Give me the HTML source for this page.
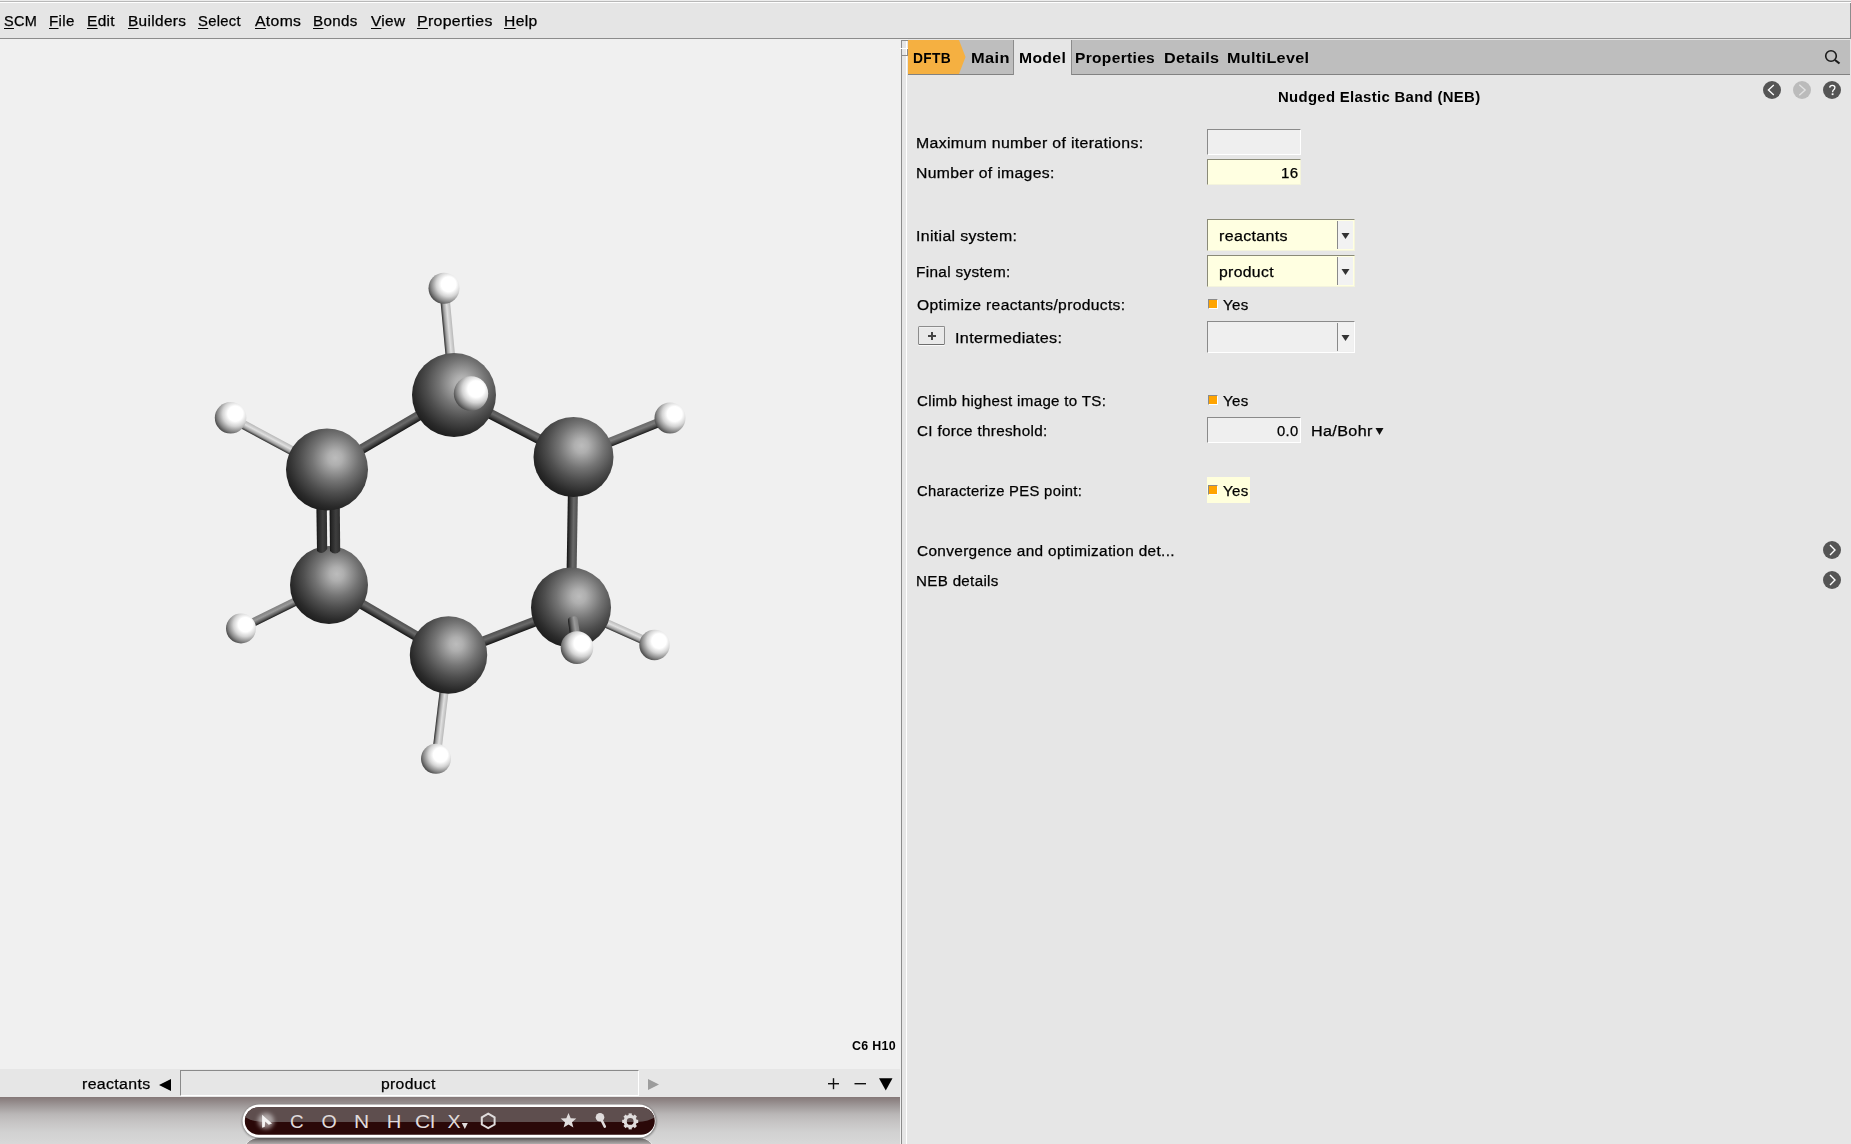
<!DOCTYPE html>
<html><head><meta charset="utf-8">
<style>
html,body{margin:0;padding:0;width:1851px;height:1144px;overflow:hidden;background:#f0f0f0;position:relative;font-family:"Liberation Sans",sans-serif;color:#000;}
.a{position:absolute;}
.t{position:absolute;font-size:14px;line-height:14px;white-space:pre;transform-origin:0 0;}
.u{text-decoration:underline;text-underline-offset:2px;}
#menubar{position:absolute;left:0;top:0;width:1851px;height:39px;background:#e5e5e5;}
</style></head>
<body>
<!-- menu bar -->
<div id="menubar">
  <div class="a" style="left:0;top:0;width:1851px;height:1px;background:#ececec"></div>
  <div class="a" style="left:0;top:1px;width:1851px;height:1px;background:#b8b8b8"></div>
  <div class="a" style="left:0;top:2px;width:1851px;height:1px;background:#fff"></div>
  <div class="a" style="left:0;top:38px;width:1851px;height:1px;background:#8c8c8c"></div>
  <div class="a" style="left:1850px;top:3px;width:1px;height:36px;background:#8c8c8c"></div>
</div>
<div id="menuitems">
</div>

<!--MOL--><svg class="a" style="left:0;top:0" width="900" height="1069" viewBox="0 0 900 1069">
<defs>
<radialGradient id="gc" cx="0.6" cy="0.36" r="0.74">
 <stop offset="0" stop-color="#bcbcbc"/><stop offset="0.12" stop-color="#afafaf"/><stop offset="0.38" stop-color="#747474"/>
 <stop offset="0.58" stop-color="#4e4e4e"/><stop offset="0.8" stop-color="#2a2a2a"/><stop offset="1" stop-color="#121212"/>
</radialGradient>
<radialGradient id="gh" cx="0.65" cy="0.37" r="0.8">
 <stop offset="0" stop-color="#ffffff"/><stop offset="0.3" stop-color="#ffffff"/><stop offset="0.5" stop-color="#d4d4d4"/>
 <stop offset="0.72" stop-color="#858585"/><stop offset="0.9" stop-color="#3a3a3a"/><stop offset="1" stop-color="#1e1e1e"/>
</radialGradient>
<linearGradient id="bd" x1="0" y1="0" x2="0" y2="1">
 <stop offset="0" stop-color="#121212"/><stop offset="0.25" stop-color="#3a3a3a"/><stop offset="0.6" stop-color="#6a6a6a"/><stop offset="1" stop-color="#505050"/>
</linearGradient>
<linearGradient id="bd2" x1="0" y1="0" x2="1" y2="0">
 <stop offset="0" stop-color="#0c0c0c"/><stop offset="0.2" stop-color="#262626"/><stop offset="0.6" stop-color="#3e3e3e"/><stop offset="1" stop-color="#2e2e2e"/>
</linearGradient>
<linearGradient id="bl" x1="0" y1="0" x2="0" y2="1">
 <stop offset="0" stop-color="#2a2a2a"/><stop offset="0.25" stop-color="#9a9a9a"/><stop offset="0.6" stop-color="#e0e0e0"/><stop offset="1" stop-color="#b8b8b8"/>
</linearGradient>
<linearGradient id="bm" x1="0" y1="0" x2="0" y2="1">
 <stop offset="0" stop-color="#1a1a1a"/><stop offset="0.25" stop-color="#5a5a5a"/><stop offset="0.6" stop-color="#9a9a9a"/><stop offset="1" stop-color="#808080"/>
</linearGradient>
<linearGradient id="bm2" x1="0" y1="0" x2="0" y2="1">
 <stop offset="0" stop-color="#1a1a1a"/><stop offset="0.25" stop-color="#4a4a4a"/><stop offset="0.6" stop-color="#7a7a7a"/><stop offset="1" stop-color="#6a6a6a"/>
</linearGradient>
</defs>
<g transform="translate(454.0,395.0) rotate(149.60)"><rect x="0" y="-5.00" width="147.2" height="10" fill="url(#bd)"/></g>
<g transform="translate(573.5,457.0) rotate(207.42)"><rect x="0" y="-5.00" width="134.6" height="10" fill="url(#bd)"/></g>
<g transform="translate(448.5,655.0) rotate(210.36)"><rect x="0" y="-5.00" width="138.5" height="10" fill="url(#bd)"/></g>
<g transform="translate(571.0,607.6) rotate(158.85)"><rect x="0" y="-5.00" width="131.4" height="10" fill="url(#bd)"/></g>
<g transform="translate(571.0,607.6) rotate(-89.05)"><rect x="0" y="-5.00" width="150.6" height="10" fill="url(#bd)"/></g>
<g transform="translate(454.0,395.0) rotate(-95.35)"><rect x="0" y="-4.75" width="107.2" height="9.5" fill="url(#bl)"/></g>
<g transform="translate(327.0,469.5) rotate(-151.80)"><rect x="0" y="-4.50" width="109.4" height="9" fill="url(#bl)"/></g>
<g transform="translate(329.0,585.0) rotate(153.70)"><rect x="0" y="-4.25" width="98.2" height="8.5" fill="url(#bm)"/></g>
<g transform="translate(436.0,758.8) rotate(276.87)"><rect x="0" y="-4.50" width="104.5" height="9" fill="url(#bl)"/></g>
<g transform="translate(670.0,418.0) rotate(157.99)"><rect x="0" y="-4.50" width="104.1" height="9" fill="url(#bm2)"/></g>
<g transform="translate(654.5,645.0) rotate(204.13)"><rect x="0" y="-4.50" width="91.5" height="9" fill="url(#bl)"/></g>
<circle cx="444" cy="288.3" r="15.5" fill="url(#gh)"/>
<circle cx="230.6" cy="417.8" r="15.8" fill="url(#gh)"/>
<circle cx="670" cy="418" r="15.5" fill="url(#gh)"/>
<circle cx="241" cy="628.5" r="15" fill="url(#gh)"/>
<circle cx="436" cy="758.8" r="15" fill="url(#gh)"/>
<circle cx="654.5" cy="645" r="15.2" fill="url(#gh)"/>
<circle cx="329" cy="585" r="39" fill="url(#gc)"/>
<path d="M316,480 L326.6,480 L327.2,549 Q322,556 317,551 Z" fill="url(#bd2)"/>
<path d="M329.2,480 L339.6,480 L340.2,551 Q335,556 330,551 Z" fill="url(#bd2)"/>
<circle cx="327" cy="469.5" r="41" fill="url(#gc)"/>
<circle cx="448.5" cy="655" r="38.7" fill="url(#gc)"/>
<circle cx="573.5" cy="457" r="40" fill="url(#gc)"/>
<circle cx="454" cy="395" r="42" fill="url(#gc)"/>
<circle cx="471" cy="393.5" r="17.2" fill="url(#gh)"/>
<circle cx="571" cy="607.6" r="40" fill="url(#gc)"/>
<g transform="translate(577.0,647.6) rotate(261.47)"><rect x="0" y="-5" width="31.4" height="10" rx="4" fill="url(#bm)"/></g>
<circle cx="577" cy="647.6" r="16.3" fill="url(#gh)"/>
</svg><!--/MOL-->

<!-- bottom nav bar -->
<div class="a" style="left:0;top:1069px;width:900px;height:28px;background:#e6e6e6"></div>
<svg class="a" style="left:158px;top:1078px" width="14" height="14"><polygon points="1,7 13,1 13,13" fill="#000"/></svg>
<div class="a" style="left:180px;top:1070px;box-sizing:border-box;width:459px;height:26px;background:#e6e6e6;border-top:1px solid #8a8a8a;border-left:1px solid #8a8a8a;border-right:1px solid #fff;border-bottom:1px solid #fff"></div>
<svg class="a" style="left:647px;top:1078px" width="14" height="14"><polygon points="1,1 12,6.5 1,12" fill="#9c9c9c"/></svg>
<svg class="a" style="left:826px;top:1076px" width="70" height="18">
 <rect x="2" y="7" width="11" height="1.4" fill="#111"/><rect x="6.8" y="2.2" width="1.4" height="11" fill="#111"/>
 <rect x="28.5" y="7" width="11.5" height="1.4" fill="#111"/>
 <polygon points="53,2.3 66.5,2.3 59.75,14.6" fill="#000"/>
</svg>

<!-- toolbar -->
<div class="a" style="left:0;top:1097px;width:900px;height:47px;background:linear-gradient(#847777 0px,#948b8b 5px,#a6a1a1 11px,#b9b6b6 17px,#c6c4c4 25px,#d1d1d1 35px,#d8d8d8 47px)"></div>
<svg class="a" style="left:236px;top:1098px" width="428" height="46">
 <defs>
  <filter id="bl1" x="-20%" y="-50%" width="140%" height="200%"><feGaussianBlur stdDeviation="1.2"/></filter>
  <filter id="bl2" x="-50%" y="-50%" width="200%" height="200%"><feGaussianBlur stdDeviation="2.2"/></filter>
  <clipPath id="pillclip"><rect x="8.8" y="9.2" width="410" height="27.6" rx="13.8" ry="13.8"/></clipPath>
  <linearGradient id="refl" x1="0" y1="0" x2="0" y2="1"><stop offset="0" stop-color="#fff" stop-opacity="0.5"/><stop offset="1" stop-color="#fff" stop-opacity="0"/></linearGradient>
 </defs>
 <linearGradient id="reflg" x1="0" y1="0" x2="0" y2="1"><stop offset="0" stop-color="#5e5a5a"/><stop offset="0.18" stop-color="#aaa6a6"/><stop offset="1" stop-color="#c8c4c4"/></linearGradient>
 <rect x="6.5" y="39.6" width="413" height="33" rx="16.5" fill="url(#reflg)" stroke="#f4f4f4" stroke-width="1" stroke-opacity="0.8"/>
 <rect x="6.3" y="7.3" width="414" height="33" rx="16.5" fill="#000" opacity="0.45" filter="url(#bl1)"/>
 <rect x="6.5" y="6.5" width="413" height="33" rx="16.5" fill="#fff"/>
 <g clip-path="url(#pillclip)">
  <rect x="0" y="0" width="428" height="46" fill="#2a0808"/>
  <path d="M0,0 L428,0 L428,12 C418,22 410,24 398,24 L32,24 C18,24 10,22 0,12 Z" fill="#5e4e4e"/>
 </g>
 <circle cx="30" cy="23" r="8" fill="#fff" opacity="0.5" filter="url(#bl2)"/>
 <path d="M26.1,16.8 L26.1,29.8 L28.8,28.8 L29.2,23.6 L32.7,26.8 L36,25.5 Z" fill="#f4f2f2"/>
 <path d="M252.2,15.6 L258.6,19.3 L258.6,26.5 L252.2,30.2 L245.8,26.5 L245.8,19.3 Z" fill="none" stroke="#e0dcdc" stroke-width="2"/>
 <polygon points="332.5,15 334.7,20.3 340.3,20.6 336,24.2 337.4,29.6 332.5,26.6 327.6,29.6 329,24.2 324.7,20.6 330.3,20.3" fill="#e0dcdc"/>
 <circle cx="364" cy="19.2" r="4.3" fill="#e0dcdc"/>
 <line x1="364.5" y1="20" x2="368.8" y2="28.6" stroke="#e0dcdc" stroke-width="2.6" stroke-linecap="round"/>
 <g transform="translate(394.2,23.4)">
  <circle r="5" fill="none" stroke="#e0dcdc" stroke-width="3.2"/>
  <g fill="#e0dcdc">
   <rect x="-1.6" y="-8" width="3.2" height="3.5"/>
   <rect x="-1.6" y="-8" width="3.2" height="3.5" transform="rotate(45)"/>
   <rect x="-1.6" y="-8" width="3.2" height="3.5" transform="rotate(90)"/>
   <rect x="-1.6" y="-8" width="3.2" height="3.5" transform="rotate(135)"/>
   <rect x="-1.6" y="-8" width="3.2" height="3.5" transform="rotate(180)"/>
   <rect x="-1.6" y="-8" width="3.2" height="3.5" transform="rotate(225)"/>
   <rect x="-1.6" y="-8" width="3.2" height="3.5" transform="rotate(270)"/>
   <rect x="-1.6" y="-8" width="3.2" height="3.5" transform="rotate(315)"/>
  </g>
 </g>
 <g fill="#e0dcdc" font-family="Liberation Sans" font-size="17.5">
  <text x="54" y="30.2" transform="translate(54,0) scale(1.08,1) translate(-54,0)">C</text>
  <text x="85.5" y="30.2" transform="translate(85.5,0) scale(1.12,1) translate(-85.5,0)">O</text>
  <text x="118" y="30.2" transform="translate(118,0) scale(1.2,1) translate(-118,0)">N</text>
  <text x="150.8" y="30.2" transform="translate(150.8,0) scale(1.15,1) translate(-150.8,0)">H</text>
  <text x="179" y="30.2" transform="translate(179,0) scale(1.2,1) translate(-179,0)">Cl</text>
  <text x="211.5" y="30.2" transform="translate(211.5,0) scale(1.12,1) translate(-211.5,0)">X</text>
 </g>
 <polygon points="225.8,25 231.8,25 228.8,31" fill="#e0dcdc"/>
</svg>

<!-- splitter -->
<div class="a" style="left:901px;top:40px;width:1px;height:1104px;background:#8c8c8c"></div>
<div class="a" style="left:902px;top:41px;width:4px;height:1103px;background:#e6e6e6"></div>
<div class="a" style="left:906px;top:41px;width:1px;height:1103px;background:#fff"></div>
<!-- right panel -->
<div class="a" style="left:907px;top:39px;width:944px;height:1105px;background:#e6e6e6"></div>
<div class="a" style="left:901px;top:39px;width:7px;height:1px;background:#f0f0f0"></div>


<!-- splitter handle notch -->
<div class="a" style="left:901px;top:40px;width:7px;height:1px;background:#8c8c8c"></div>
<div class="a" style="left:900px;top:48px;width:8px;height:1px;background:#fff"></div>
<div class="a" style="left:901px;top:55px;width:7px;height:1px;background:#8c8c8c"></div>
<div class="a" style="left:907px;top:49px;width:1px;height:6px;background:#8c8c8c"></div>
<!-- tab bar -->
<div class="a" style="left:908px;top:40px;width:942px;height:34px;background:#bebebe"></div>
<div class="a" style="left:908px;top:74px;width:942px;height:1px;background:#828282"></div>
<svg class="a" style="left:908px;top:40px" width="60" height="34"><polygon points="0,0 51,0 57.5,17 51,34 0,34" fill="#f5b041"/></svg>
<div class="a" style="left:1013px;top:40px;width:1px;height:35px;background:#8c8c8c"></div>
<div class="a" style="left:1014px;top:40px;width:57px;height:35px;background:#e6e6e6"></div>
<div class="a" style="left:1071px;top:40px;width:1px;height:35px;background:#8c8c8c"></div>
<svg class="a" style="left:1822px;top:46px" width="20" height="20"><circle cx="9" cy="10" r="5.3" fill="none" stroke="#1a1a1a" stroke-width="1.6"/><line x1="13" y1="14" x2="17.5" y2="17.5" stroke="#1a1a1a" stroke-width="2.2"/></svg>
<!-- nav circles -->
<svg class="a" style="left:1760px;top:78px" width="84" height="24">
 <circle cx="12" cy="12" r="9" fill="#555"/><polyline points="13.8,7 8.4,12 13.8,17" fill="none" stroke="#fff" stroke-width="1.3"/>
 <circle cx="42" cy="12" r="9" fill="#bbb"/><polyline points="39.3,6.8 45.2,12 39.3,17.2" fill="none" stroke="#e2e2e2" stroke-width="1.3"/>
 <circle cx="72" cy="12" r="9" fill="#555"/>
 <path d="M69.7,9.6 Q69.9,7.4 72.3,7.4 Q74.9,7.4 74.9,9.6 Q74.9,11.1 73.5,12 Q72.6,12.7 72.6,14.3" fill="none" stroke="#fff" stroke-width="1.3"/><rect x="71.7" y="15.3" width="1.8" height="1.8" fill="#fff"/>
</svg>

<!-- form -->

<!-- fields -->
<div class="a" style="left:1207px;top:129px;width:93px;height:25px;background:#efefef;border-top:1px solid #8a8a8a;border-left:1px solid #8a8a8a;border-right:1px solid #fff;border-bottom:1px solid #fff;box-sizing:border-box;width:94px;height:26px"></div>
<div class="a" style="left:1207px;top:159px;box-sizing:border-box;width:94px;height:26px;background:#ffffe1;border-top:1px solid #8a8a78;border-left:1px solid #8a8a78;border-right:1px solid #f4f4dc;border-bottom:1px solid #f4f4dc"></div>

<div class="a" style="left:1207px;top:219px;box-sizing:border-box;width:148px;height:32px;background:#ffffe1;border-top:1px solid #8a8a78;border-left:1px solid #8a8a78;border-right:1px solid #f4f4dc;border-bottom:1px solid #f4f4dc"></div>
<div class="a" style="left:1337px;top:221px;width:1px;height:28px;background:#8a8a8a"></div>
<div class="a" style="left:1338px;top:221px;width:15px;height:28px;background:#f2f2f2"></div>
<svg class="a" style="left:1341px;top:232px" width="10" height="8"><polygon points="0.5,1 8.5,1 4.5,7" fill="#333"/></svg>

<div class="a" style="left:1207px;top:255px;box-sizing:border-box;width:148px;height:32px;background:#ffffe1;border-top:1px solid #8a8a78;border-left:1px solid #8a8a78;border-right:1px solid #f4f4dc;border-bottom:1px solid #f4f4dc"></div>
<div class="a" style="left:1337px;top:257px;width:1px;height:28px;background:#8a8a8a"></div>
<div class="a" style="left:1338px;top:257px;width:15px;height:28px;background:#f2f2f2"></div>
<svg class="a" style="left:1341px;top:268px" width="10" height="8"><polygon points="0.5,1 8.5,1 4.5,7" fill="#333"/></svg>

<div class="a" style="left:1208px;top:299px;box-sizing:border-box;width:10px;height:10px;background:#ffa400;border-top:1px solid #8a8a8a;border-left:1px solid #8a8a8a;border-right:1px solid #fff;border-bottom:1px solid #fff"></div>

<div class="a" style="left:918px;top:326px;box-sizing:border-box;width:27px;height:19px;background:#e9e9e9;border:1px solid #8c8c8c;border-bottom-color:#6e6e6e;border-radius:1.5px;box-shadow:0 1px 0 #fafafa, inset 0 1px 0 #f0f0f0"></div>
<div class="a" style="left:928px;top:335px;width:8px;height:2px;background:#444"></div>
<div class="a" style="left:931px;top:332px;width:2px;height:8px;background:#444"></div>

<div class="a" style="left:1207px;top:321px;box-sizing:border-box;width:148px;height:32px;background:#efefef;border-top:1px solid #8a8a8a;border-left:1px solid #8a8a8a;border-right:1px solid #fff;border-bottom:1px solid #fff"></div>
<div class="a" style="left:1337px;top:323px;width:1px;height:28px;background:#8a8a8a"></div>
<div class="a" style="left:1338px;top:323px;width:15px;height:28px;background:#f1f1f1"></div>
<svg class="a" style="left:1341px;top:334px" width="10" height="8"><polygon points="0.5,1 8.5,1 4.5,7" fill="#333"/></svg>

<div class="a" style="left:1208px;top:395px;box-sizing:border-box;width:10px;height:10px;background:#ffa400;border-top:1px solid #8a8a8a;border-left:1px solid #8a8a8a;border-right:1px solid #fff;border-bottom:1px solid #fff"></div>

<div class="a" style="left:1207px;top:417px;box-sizing:border-box;width:94px;height:26px;background:#efefef;border-top:1px solid #8a8a8a;border-left:1px solid #8a8a8a;border-right:1px solid #fff;border-bottom:1px solid #fff"></div>
<svg class="a" style="left:1375px;top:426px" width="10" height="10"><polygon points="0.5,2 8.5,2 4.5,9" fill="#111"/></svg>

<div class="a" style="left:1207px;top:477px;width:43px;height:26px;background:#ffffdc"></div>
<div class="a" style="left:1208px;top:485px;box-sizing:border-box;width:10px;height:10px;background:#ffa400;border-top:1px solid #8a8a8a;border-left:1px solid #8a8a8a;border-right:1px solid #fff;border-bottom:1px solid #fff"></div>

<svg class="a" style="left:1820px;top:538px" width="24" height="54">
 <circle cx="12" cy="12" r="9" fill="#555"/><polyline points="10,7 15,12 10,17" fill="none" stroke="#fff" stroke-width="1.4"/>
 <circle cx="12" cy="42" r="9" fill="#555"/><polyline points="10,37 15,42 10,47" fill="none" stroke="#fff" stroke-width="1.4"/>
</svg>
<!--TEXTS-->
<div class="t" style="left:4.27px;top:14px;font-size:14px;line-height:14px;letter-spacing:0.3px;-webkit-text-stroke:0.25px #000;transform:scaleX(1.0333);"><span class="u">S</span>CM</div>
<div class="t" style="left:49.32px;top:14px;font-size:14px;line-height:14px;letter-spacing:0.3px;-webkit-text-stroke:0.25px #000;transform:scaleX(1.0773);"><span class="u">F</span>ile</div>
<div class="t" style="left:87.10px;top:14px;font-size:14px;line-height:14px;letter-spacing:0.3px;-webkit-text-stroke:0.25px #000;transform:scaleX(1.1042);"><span class="u">E</span>dit</div>
<div class="t" style="left:127.50px;top:14px;font-size:14px;line-height:14px;letter-spacing:0.3px;-webkit-text-stroke:0.25px #000;transform:scaleX(1.1000);"><span class="u">B</span>uilders</div>
<div class="t" style="left:198.34px;top:14px;font-size:14px;line-height:14px;letter-spacing:0.3px;-webkit-text-stroke:0.25px #000;transform:scaleX(1.0550);"><span class="u">S</span>elect</div>
<div class="t" style="left:254.90px;top:14px;font-size:14px;line-height:14px;letter-spacing:0.3px;-webkit-text-stroke:0.25px #000;transform:scaleX(1.1244);"><span class="u">A</span>toms</div>
<div class="t" style="left:313.42px;top:14px;font-size:14px;line-height:14px;letter-spacing:0.3px;-webkit-text-stroke:0.25px #000;transform:scaleX(1.0825);"><span class="u">B</span>onds</div>
<div class="t" style="left:370.70px;top:14px;font-size:14px;line-height:14px;letter-spacing:0.3px;-webkit-text-stroke:0.25px #000;transform:scaleX(1.1000);"><span class="u">V</span>iew</div>
<div class="t" style="left:417.07px;top:14px;font-size:14px;line-height:14px;letter-spacing:0.3px;-webkit-text-stroke:0.25px #000;transform:scaleX(1.1323);"><span class="u">P</span>roperties</div>
<div class="t" style="left:504.18px;top:14px;font-size:14px;line-height:14px;letter-spacing:0.3px;-webkit-text-stroke:0.25px #000;transform:scaleX(1.1172);"><span class="u">H</span>elp</div>
<div class="t" style="left:915.57px;top:136px;font-size:14px;line-height:14px;letter-spacing:0.3px;-webkit-text-stroke:0.25px #000;transform:scaleX(1.1322);">Maximum number of iterations:</div>
<div class="t" style="left:915.58px;top:166px;font-size:14px;line-height:14px;letter-spacing:0.3px;-webkit-text-stroke:0.25px #000;transform:scaleX(1.1240);">Number of images:</div>
<div class="t" style="left:915.57px;top:229px;font-size:14px;line-height:14px;letter-spacing:0.3px;-webkit-text-stroke:0.25px #000;transform:scaleX(1.1333);">Initial system:</div>
<div class="t" style="left:915.60px;top:265px;font-size:14px;line-height:14px;letter-spacing:0.3px;-webkit-text-stroke:0.25px #000;transform:scaleX(1.0964);">Final system:</div>
<div class="t" style="left:916.70px;top:298px;font-size:14px;line-height:14px;letter-spacing:0.3px;-webkit-text-stroke:0.25px #000;transform:scaleX(1.1172);">Optimize reactants/products:</div>
<div class="t" style="left:955.04px;top:331px;font-size:14px;line-height:14px;letter-spacing:0.3px;-webkit-text-stroke:0.25px #000;transform:scaleX(1.1560);">Intermediates:</div>
<div class="t" style="left:916.70px;top:394px;font-size:14px;line-height:14px;letter-spacing:0.3px;-webkit-text-stroke:0.25px #000;transform:scaleX(1.0777);">Climb highest image to TS:</div>
<div class="t" style="left:916.70px;top:424px;font-size:14px;line-height:14px;letter-spacing:0.3px;-webkit-text-stroke:0.25px #000;transform:scaleX(1.0866);">CI force threshold:</div>
<div class="t" style="left:916.70px;top:484px;font-size:14px;line-height:14px;letter-spacing:0.3px;-webkit-text-stroke:0.25px #000;transform:scaleX(1.0568);">Characterize PES point:</div>
<div class="t" style="left:916.70px;top:544px;font-size:14px;line-height:14px;letter-spacing:0.3px;-webkit-text-stroke:0.25px #000;transform:scaleX(1.0991);">Convergence and optimization det...</div>
<div class="t" style="left:915.62px;top:574px;font-size:14px;line-height:14px;letter-spacing:0.3px;-webkit-text-stroke:0.25px #000;transform:scaleX(1.0813);">NEB details</div>
<div class="t" style="left:1219.06px;top:229px;font-size:14px;line-height:14px;letter-spacing:0.3px;-webkit-text-stroke:0.25px #000;transform:scaleX(1.1424);">reactants</div>
<div class="t" style="left:1219.08px;top:265px;font-size:14px;line-height:14px;letter-spacing:0.3px;-webkit-text-stroke:0.25px #000;transform:scaleX(1.1250);">product</div>
<div class="t" style="left:1223.00px;top:298px;font-size:14px;line-height:14px;letter-spacing:0.3px;-webkit-text-stroke:0.25px #000;transform:scaleX(1.0739);">Yes</div>
<div class="t" style="left:1223.00px;top:394px;font-size:14px;line-height:14px;letter-spacing:0.3px;-webkit-text-stroke:0.25px #000;transform:scaleX(1.0739);">Yes</div>
<div class="t" style="left:1223.00px;top:484px;font-size:14px;line-height:14px;letter-spacing:0.3px;-webkit-text-stroke:0.25px #000;transform:scaleX(1.0739);">Yes</div>
<div class="t" style="left:1280.83px;top:166px;font-size:14px;line-height:14px;letter-spacing:0.3px;-webkit-text-stroke:0.25px #000;transform:scaleX(1.0733);">16</div>
<div class="t" style="left:1276.80px;top:424px;font-size:14px;line-height:14px;letter-spacing:0.3px;-webkit-text-stroke:0.25px #000;transform:scaleX(1.0550);">0.0</div>
<div class="t" style="left:1310.85px;top:424px;font-size:14px;line-height:14px;letter-spacing:0.3px;-webkit-text-stroke:0.25px #000;transform:scaleX(1.1538);">Ha/Bohr</div>
<div class="t" style="left:81.86px;top:1077px;font-size:14px;line-height:14px;letter-spacing:0.3px;-webkit-text-stroke:0.25px #000;transform:scaleX(1.1356);">reactants</div>
<div class="t" style="left:381.28px;top:1077px;font-size:14px;line-height:14px;letter-spacing:0.3px;-webkit-text-stroke:0.25px #000;transform:scaleX(1.1208);">product</div>
<div class="t" style="left:913.02px;top:51px;font-size:14px;line-height:14px;font-weight:bold;letter-spacing:0.3px;-webkit-text-stroke:0.0px #000;transform:scaleX(0.9838);">DFTB</div>
<div class="t" style="left:970.83px;top:51px;font-size:14px;line-height:14px;font-weight:bold;letter-spacing:0.3px;-webkit-text-stroke:0.0px #000;transform:scaleX(1.1710);">Main</div>
<div class="t" style="left:1018.88px;top:51px;font-size:14px;line-height:14px;font-weight:bold;letter-spacing:0.3px;-webkit-text-stroke:0.0px #000;transform:scaleX(1.1225);">Model</div>
<div class="t" style="left:1075.19px;top:51px;font-size:14px;line-height:14px;font-weight:bold;letter-spacing:0.3px;-webkit-text-stroke:0.0px #000;transform:scaleX(1.1085);">Properties</div>
<div class="t" style="left:1164.15px;top:51px;font-size:14px;line-height:14px;font-weight:bold;letter-spacing:0.3px;-webkit-text-stroke:0.0px #000;transform:scaleX(1.1543);">Details</div>
<div class="t" style="left:1227.15px;top:51px;font-size:14px;line-height:14px;font-weight:bold;letter-spacing:0.3px;-webkit-text-stroke:0.0px #000;transform:scaleX(1.1536);">MultiLevel</div>
<div class="t" style="left:1277.54px;top:90px;font-size:14px;line-height:14px;font-weight:bold;letter-spacing:0.3px;-webkit-text-stroke:0.0px #000;transform:scaleX(1.0638);">Nudged Elastic Band (NEB)</div>
<div class="t" style="left:851.50px;top:1040px;font-size:12px;line-height:12px;font-weight:bold;letter-spacing:0.3px;-webkit-text-stroke:0.0px #000;transform:scaleX(1.0357);">C6 H10</div>
<!--/TEXTS-->
</body></html>
